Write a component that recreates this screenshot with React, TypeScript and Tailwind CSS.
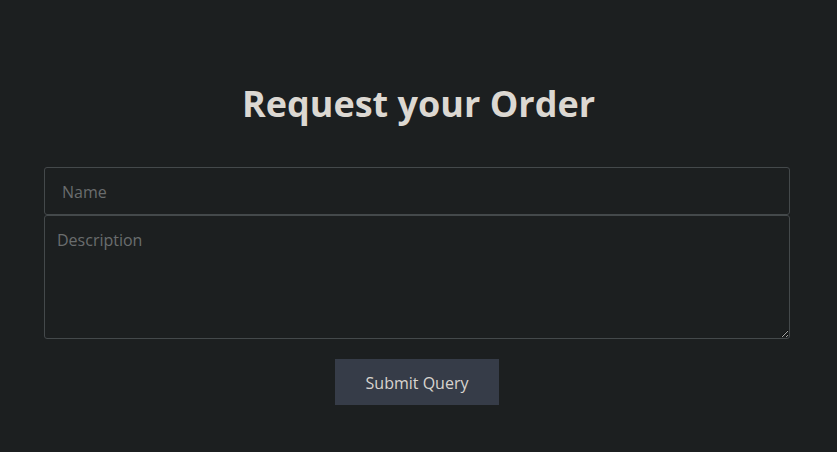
export default function App() {
  return (
    <div
      className="min-h-[452px] bg-[#1c1f20] pt-[82px]"
      style={{ fontFamily: '"Open Sans", sans-serif' }}
    >
      <h1 className="text-center text-[36px] font-bold leading-[44px] text-[#dcd8d2]">
        Request your Order
      </h1>

      <form className="ml-[44px] mr-[47px] mt-[41px] flex flex-col">
        <input
          type="text"
          placeholder="Name"
          className="h-[48px] rounded-[3px] border border-[#44494b] bg-[#1c1f20] px-[17px] pt-[2px] text-[16px] text-[#dcd8d2] placeholder:text-[#6a6d6e] outline-none"
        />
        <textarea
          placeholder="Description"
          className="h-[124px] rounded-[3px] border border-[#44494b] bg-[#1c1f20] px-[12px] py-[12px] text-[16px] text-[#dcd8d2] placeholder:text-[#6a6d6e] outline-none"
        />
        <div className="mt-[20px] flex justify-center">
          <button
            type="submit"
            className="h-[46px] w-[164px] bg-[#363c48] pt-[2px] text-[16px] text-[#d8d4cf]"
          >
            Submit Query
          </button>
        </div>
      </form>
    </div>
  );
}
